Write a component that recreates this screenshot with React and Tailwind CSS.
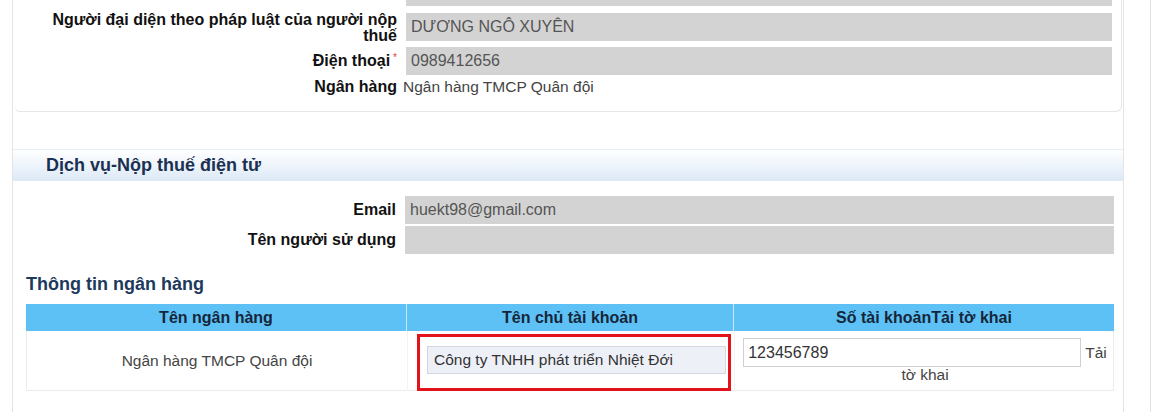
const Field = ({ children, className = "" }) => (
  <div className={`h-[28px] flex-1 bg-[#d3d3d3] px-[5px] text-[16px] leading-[28px] text-[#555] ${className}`}>
    {children}
  </div>
);

const Row = ({ label, children, className = "" }) => (
  <div className={`flex items-start ${className}`}>
    <div className="w-[383px] shrink-0 text-right text-[16px] font-bold leading-[16px] text-[#111]">{label}</div>
    <div className="ml-[9px] mr-[9px] flex flex-1">{children}</div>
  </div>
);

export default function App() {
  return (
    <div className="flex h-[412px] w-[1154px] overflow-hidden bg-white pl-[12px] font-['Liberation_Sans',Arial,sans-serif] text-[15.5px] text-[#222]">
      <div className="w-[1112px] shrink-0 border-x border-[#e4e4e4]">
        {/* chủ thể */}
        <div className="mx-[1px] rounded-b-[6px] border-b border-r border-[#e6e6e6] pb-[16px]">
          <div className="-mt-[22px] flex flex-col">
            <Row className="h-[35px]">
              <Field>&nbsp;</Field>
            </Row>
            <Row
              className="h-[35px] -mt-[1px]"
              label={
                <>
                  Người đại diện theo pháp luật của người nộp
                  <br />
                  thuế
                </>
              }
            >
              <Field className="mt-[1px]">DƯƠNG NGÔ XUYÊN</Field>
            </Row>
            <Row
              className="h-[35px] items-center"
              label={
                <span className="leading-[28px]">
                  Điện thoại<sup className="ml-[3px] text-[10px] font-normal text-[#e23b3b]">*</sup>
                </span>
              }
            >
              <Field>0989412656</Field>
            </Row>
            <Row className="-mt-[3px]" label="Ngân hàng">
              <span className="-ml-[3px] leading-[16px] text-[#444]">Ngân hàng TMCP Quân đội</span>
            </Row>
          </div>
        </div>

        {/* dịch vụ */}
        <div className="mt-[37px] h-[32px] border-t border-[#e4ecf5] bg-gradient-to-b from-white to-[#dce9f7] pl-[33px] text-[18px] font-bold leading-[31px] text-[#1b3152]">
          Dịch vụ-Nộp thuế điện tử
        </div>

        <div className="mt-[15px] flex flex-col gap-[2px]">
          <Row className="items-center" label={<span className="leading-[28px]">Email</span>}>
            <Field>huekt98@gmail.com</Field>
          </Row>
          <Row className="items-center" label={<span className="leading-[28px]">Tên người sử dụng</span>}>
            <Field />
          </Row>
        </div>

        <div className="mt-[21px] pl-[13px] text-[18px] font-bold leading-[18px] text-[#1d3a5e]">Thông tin ngân hàng</div>

        <div className="ml-[13px] mt-[11px] w-[1088px]">
          <div className="grid h-[27px] grid-cols-[380px_327px_381px] bg-[#5ec1f5] text-center text-[16px] font-bold leading-[27px] text-[#15263a]">
            <div>Tên ngân hàng</div>
            <div className="border-l border-[#c9e9fb]">Tên chủ tài khoản</div>
            <div className="border-l border-[#c9e9fb]">Số tài khoảnTải tờ khai</div>
          </div>
          <div className="grid h-[60px] grid-cols-[380px_327px_381px] border-x border-b border-[#ececec]">
            <div className="flex items-center justify-center text-[#444]">Ngân hàng TMCP Quân đội</div>
            <div className="border-l border-[#f3f3f3] pl-[9px] pt-[3px]">
              <div className="h-[57px] w-[314px] border-[3px] border-[#e3131b] pl-[7px] pt-[9px]">
                <div className="h-[28px] w-[299px] border border-[#d2d6df] bg-[#eef0f7] pl-[6px] leading-[26px] text-[#333]">
                  Công ty TNHH phát triển Nhiệt Đới
                </div>
              </div>
            </div>
            <div className="border-l border-[#f3f3f3] px-[4px] pt-[7px] text-center leading-[16px] text-[#444]">
              <span className="inline-block h-[29px] w-[338px] border border-[#d0d0d0] bg-white pl-[4px] text-left text-[16px] leading-[27px] text-[#333] align-baseline">
                123456789
              </span>{" "}
              Tải tờ khai
            </div>
          </div>
        </div>
      </div>
      <div className="w-[26px] shrink-0" />
      <div className="w-[4px] shrink-0 border-l border-[#e2e2e2]" />
    </div>
  );
}
